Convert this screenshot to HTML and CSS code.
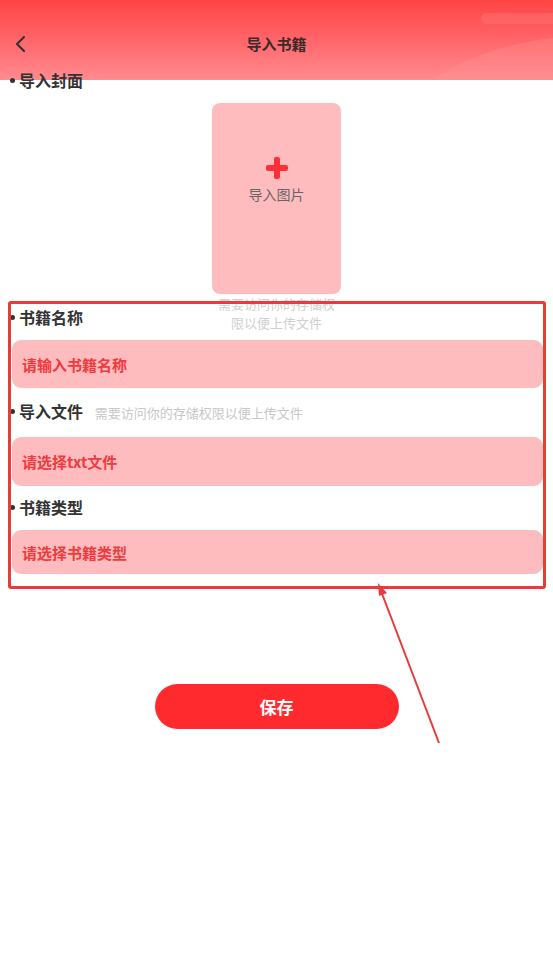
FILE: index.html
```html
<!DOCTYPE html>
<html lang="zh-CN">
<head>
  <meta charset="UTF-8" />
  <meta name="viewport" content="width=device-width, initial-scale=1.0"/>
  <title>导入书籍</title>
  <link rel="stylesheet" href="styles.css">
</head>
<body>
  <div class="page">
    <div class="header-bg">
      <svg class="deco" width="120" height="80" viewBox="0 0 120 80">
        <rect x="48" y="13" width="90" height="11" rx="5.5" fill="#ff7070" opacity="0.5"/>
        <path d="M0 80 C 30 58, 70 44, 120 38 L120 80 Z" fill="#ff9a9a" opacity="0.25"/>
      </svg>
    </div>

    <div class="nav">
      <svg class="back" width="14" height="18" viewBox="0 0 14 18">
        <path d="M10 2 L3 9 L10 16" fill="none" stroke="#333" stroke-width="2.2" stroke-linecap="round" stroke-linejoin="round"/>
      </svg>
      <div class="title">导入书籍</div>
    </div>

    <div class="label label-first">导入封面</div>

    <div class="cover-wrap">
      <div class="cover">
        <div class="plus"></div>
        <div class="cover-text">导入图片</div>
      </div>
      <div class="cover-hint">需要访问你的存储权限以便上传文件</div>
    </div>

    <div class="label">书籍名称</div>
    <div class="field">请输入书籍名称</div>

    <div class="label">导入文件 <span class="hint">需要访问你的存储权限以便上传文件</span></div>
    <div class="field field-mid">请选择txt文件</div>

    <div class="label label-last">书籍类型</div>
    <div class="field field-short">请选择书籍类型</div>

    <button class="save">保存</button>

    <!-- 标注 -->
    <div class="mark"></div>
    <svg class="arrow" width="80" height="170" viewBox="0 0 80 170">
      <line x1="61" y1="160" x2="3" y2="8" stroke="#e83a3a" stroke-width="2"/>
      <polygon points="0,0 9,10 1,13" fill="#e83a3a"/>
    </svg>
  </div>
</body>
</html>
```

FILE: styles.css
```css
* { box-sizing: border-box; }

body {
  margin: 0;
  background: #fff;
  font-family: "Noto Sans CJK SC", "Noto Sans", sans-serif;
  color: #333;
}

.page {
  position: relative;
  min-height: 953px;
  padding: 0 10px;
}

.header-bg {
  position: absolute;
  top: 0;
  left: 0;
  right: 0;
  height: 80px;
  background: linear-gradient(to bottom, #ff4444 0%, #ff6266 45%, #ff8b8f 100%);
  overflow: hidden;
}

.deco {
  position: absolute;
  right: 0;
  top: 0;
}

.nav {
  position: relative;
  height: 58px;
  padding-top: 30px;
  display: flex;
  align-items: center;
  justify-content: center;
}

.nav .title {
  font-size: 15px;
  font-weight: bold;
  line-height: 28px;
  color: #3a2a2a;
}

.back {
  position: absolute;
  left: 4px;
  top: 35px;
}

.label {
  position: relative;
  font-size: 16px;
  font-weight: bold;
  line-height: 20px;
  margin-top: 13px;
  padding-left: 9px;
  color: #333;
}

.label::before {
  content: "";
  position: absolute;
  left: 0;
  top: 8px;
  width: 5px;
  height: 5px;
  border-radius: 50%;
  background: #333;
}

.label-first { margin-top: 12px; }
.label-last { margin-top: 11px; }

.hint {
  font-size: 13px;
  font-weight: normal;
  color: #c8c8c8;
  margin-left: 8px;
}

.cover-wrap {
  position: relative;
  width: 129px;
  margin: 13px auto 0;
}

.cover {
  height: 191px;
  background: #ffbcbf;
  border-radius: 8px;
  display: flex;
  flex-direction: column;
  align-items: center;
  padding-top: 54px;
}

.plus {
  position: relative;
  width: 22px;
  height: 22px;
}

.plus::before, .plus::after {
  content: "";
  position: absolute;
  background: #ff3035;
  border-radius: 2px;
}

.plus::before { left: 0; top: 8px; width: 22px; height: 6px; }
.plus::after  { left: 8px; top: 0; width: 6px; height: 22px; }

.cover-text {
  margin-top: 5px;
  font-size: 14px;
  color: #666;
}

.cover-hint {
  position: absolute;
  top: 100%;
  left: 4px;
  right: 4px;
  font-size: 13px;
  line-height: 19px;
  color: #cfcfcf;
  text-align: center;
}

.field {
  margin-top: 13px;
  margin-left: 2px;
  height: 48px;
  padding-left: 10px;
  display: flex;
  align-items: center;
  background: #ffbcbf;
  border-radius: 9px;
  font-size: 15px;
  font-weight: bold;
  color: #f03a3e;
}

.field-mid { height: 49px; margin-top: 14px; }
.field-short { height: 44px; }

.save {
  display: block;
  margin: 110px auto 0;
  width: 244px;
  height: 45px;
  border: none;
  border-radius: 23px;
  background: #ff2a2e;
  color: #fff;
  font-family: inherit;
  font-size: 17px;
  font-weight: bold;
  padding: 0;
}

.mark {
  position: absolute;
  left: 8px;
  top: 301px;
  width: 538px;
  height: 288px;
  border: 3px solid #ea3b3b;
  border-radius: 3px;
}

.arrow {
  position: absolute;
  left: 378px;
  top: 583px;
}
```
